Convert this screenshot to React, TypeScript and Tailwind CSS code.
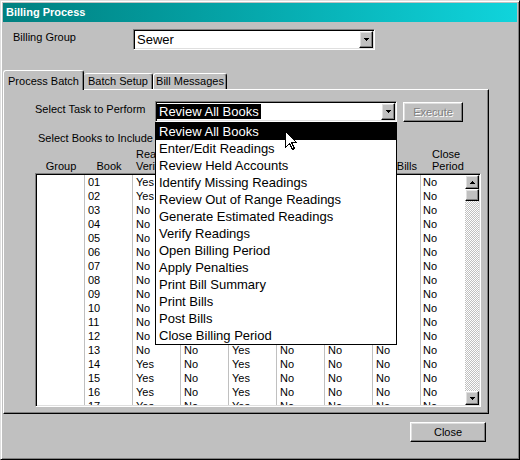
import React from 'react';

const raised =
  'border border-t-white border-l-white border-r-black border-b-black shadow-[inset_-1px_-1px_0_#808080,inset_1px_1px_0_#dfdfdf]';
const sunken =
  'border border-t-[#808080] border-l-[#808080] border-r-white border-b-white shadow-[inset_1px_1px_0_#000,inset_-1px_-1px_0_#dfdfdf]';

const tasks = [
  'Review All Books',
  'Enter/Edit Readings',
  'Review Held Accounts',
  'Identify Missing Readings',
  'Review Out of Range Readings',
  'Generate Estimated Readings',
  'Verify Readings',
  'Open Billing Period',
  'Apply Penalties',
  'Print Bill Summary',
  'Print Bills',
  'Post Bills',
  'Close Billing Period',
];

// group, book, read verified, held, period open, penalties, summary, bills, close period
const rows: string[][] = [
  ['', '01', 'Yes', 'No', 'Yes', 'No', 'No', 'No', 'No'],
  ['', '02', 'Yes', 'No', 'Yes', 'No', 'No', 'No', 'No'],
  ['', '03', 'No', 'No', 'Yes', 'No', 'No', 'No', 'No'],
  ['', '04', 'No', 'No', 'Yes', 'No', 'No', 'No', 'No'],
  ['', '05', 'No', 'No', 'Yes', 'No', 'No', 'No', 'No'],
  ['', '06', 'No', 'No', 'Yes', 'No', 'No', 'No', 'No'],
  ['', '07', 'No', 'No', 'Yes', 'No', 'No', 'No', 'No'],
  ['', '08', 'No', 'No', 'Yes', 'No', 'No', 'No', 'No'],
  ['', '09', 'No', 'No', 'Yes', 'No', 'No', 'No', 'No'],
  ['', '10', 'No', 'No', 'Yes', 'No', 'No', 'No', 'No'],
  ['', '11', 'No', 'No', 'Yes', 'No', 'No', 'No', 'No'],
  ['', '12', 'No', 'No', 'Yes', 'No', 'No', 'No', 'No'],
  ['', '13', 'No', 'No', 'Yes', 'No', 'No', 'No', 'No'],
  ['', '14', 'Yes', 'No', 'Yes', 'No', 'No', 'No', 'No'],
  ['', '15', 'Yes', 'No', 'Yes', 'No', 'No', 'No', 'No'],
  ['', '16', 'Yes', 'No', 'Yes', 'No', 'No', 'No', 'No'],
  ['', '17', 'Yes', 'No', 'Yes', 'No', 'No', 'No', 'No'],
];

const DownArrow = () => (
  <svg width="5" height="3" viewBox="0 0 5 3" shapeRendering="crispEdges">
    <rect x="0" y="0" width="5" height="1" fill="#000" />
    <rect x="1" y="1" width="3" height="1" fill="#000" />
    <rect x="2" y="2" width="1" height="1" fill="#000" />
  </svg>
);

const UpArrow = () => (
  <svg width="5" height="3" viewBox="0 0 5 3" shapeRendering="crispEdges">
    <rect x="2" y="0" width="1" height="1" fill="#000" />
    <rect x="1" y="1" width="3" height="1" fill="#000" />
    <rect x="0" y="2" width="5" height="1" fill="#000" />
  </svg>
);

const Cursor = () => (
  <svg width="13" height="20" viewBox="0 0 13 20" shapeRendering="crispEdges">
    <path d="M0.5 0.5 L0.5 16.5 L4.5 12.5 L7.5 18.5 L9.5 17.5 L6.5 11.5 L11.5 11.5 Z" fill="#fff" stroke="#000" strokeWidth="1" />
  </svg>
);

const Combo: React.FC<{ children: React.ReactNode; list?: boolean }> = ({ children, list }) => (
  <div className={`${sunken} relative w-[242px] h-[21px] bg-white p-[1px] flex`}>
    <div className="flex-1 flex items-center text-[13px]">{children}</div>
    <div className={`${raised} w-[14px] h-full bg-[#c0c0c0] flex items-center justify-center`}>
      <DownArrow />
    </div>
    {list && (
      <div className="absolute left-[-1px] top-[20px] w-[242px] border border-black bg-white z-20">
        {tasks.map((t, i) => (
          <div
            key={t}
            className={`h-[17px] leading-[17px] pl-[3px] text-[13px] whitespace-nowrap ${i === 0 ? 'bg-black text-white' : 'text-black'}`}
          >
            {t}
          </div>
        ))}
        <div className="absolute left-[129px] top-[8px]">
          <Cursor />
        </div>
      </div>
    )}
  </div>
);

export default function App() {
  return (
    <div className="w-[520px] h-[460px] bg-[#c0c0c0] p-[2px] flex flex-col border border-t-[#dfdfdf] border-l-[#dfdfdf] border-r-black border-b-black shadow-[inset_1px_1px_0_#fff,inset_-1px_-1px_0_#808080] font-['Liberation_Sans',Arial,sans-serif] text-[11px] text-black">
      {/* Title bar */}
      <div className="h-[19px] shrink-0 flex items-center pl-[3px] bg-linear-to-r from-[#008080] to-[#10d4dc] text-white font-bold text-[11px]">
        Billing Process
      </div>

      {/* Billing group */}
      <div className="mt-[7px] flex items-start pl-[10px]">
        <span className="w-[120px] pt-[2px] leading-[13px]">Billing Group</span>
        <Combo>
          <span className="pl-[2px]">Sewer</span>
        </Combo>
      </div>

      {/* Tabs */}
      <div className="mt-[20px] h-[19px] flex items-end relative z-10">
        <div className="w-[81px] h-[20px] -mb-[1px] bg-[#c0c0c0] border-t border-l border-r border-t-white border-l-white border-r-black rounded-t-[3px] shadow-[inset_-1px_0_0_#808080] flex items-center justify-center pt-[1px] leading-[13px]">
          Process Batch
        </div>
        <div className="w-[69px] h-[16px] border-t border-r border-t-white border-r-black rounded-t-[3px] shadow-[inset_-1px_0_0_#808080] flex items-center justify-center leading-[13px]">
          Batch Setup
        </div>
        <div className="w-[74px] h-[16px] border-t border-l border-r border-t-white border-l-white border-r-black rounded-t-[3px] shadow-[inset_-1px_0_0_#808080] flex items-center justify-center leading-[13px]">
          Bill Messages
        </div>
      </div>

      {/* Tab panel */}
      <div className="w-[486px] h-[325px] shrink-0 border border-t-white border-l-white border-r-black border-b-black shadow-[inset_-1px_-1px_0_#808080] flex flex-col">
        <div className="pt-[11px] pl-[31px] flex items-start">
          <span className="w-[120px] pt-[2px] leading-[13px]">Select Task to Perform</span>
          <Combo list>
            <span className="bg-black text-white px-[2px] leading-[15px]">Review All Books</span>
          </Combo>
          <div className={`${raised} w-[60px] h-[20px] mt-[1px] ml-[6px] flex items-center justify-center text-[#808080] [text-shadow:1px_1px_0_#fff]`}>
            Execute
          </div>
        </div>

        <div className="mt-[10px] pl-[34px] leading-[13px]">Select Books to Include</div>

        {/* Grid header */}
        <div className="mt-[3px] ml-[31px] w-[446px] h-[25px] pl-[2px] pb-[1px] flex items-end leading-[12px]">
          <div className="w-[48px] text-center">Group</div>
          <div className="w-[48px] text-center">Book</div>
          <div className="w-[48px] pl-[3px]">Read<br />Verified</div>
          <div className="w-[48px] text-center">Held</div>
          <div className="w-[48px] text-center">Period<br />Open</div>
          <div className="w-[48px] text-center">Penalties</div>
          <div className="w-[48px] text-center">Summary</div>
          <div className="w-[48px] pr-[4px] flex justify-end whitespace-nowrap">Print Bills</div>
          <div className="w-[58px] pl-[11px]">Close<br />Period</div>
        </div>

        {/* Grid */}
        <div className={`${sunken} ml-[31px] w-[446px] h-[234px] bg-white p-[1px] flex overflow-hidden`}>
          <div className="flex-1 flex flex-col overflow-hidden">
            {rows.map((r) => (
              <div key={r[1]} className="h-[14px] shrink-0 flex leading-[14px]">
                {r.map((c, i) => (
                  <div
                    key={i}
                    className={i < 8 ? 'w-[48px] h-full border-r border-[#c0c0c0] pl-[3px]' : 'w-[44px] h-full pl-[2px]'}
                  >
                    {c}
                  </div>
                ))}
              </div>
            ))}
          </div>
          <div className="w-[14px] flex flex-col">
            <div className={`${raised} h-[14px] bg-[#c0c0c0] flex items-center justify-center`}>
              <UpArrow />
            </div>
            <div className={`${raised} h-[12px] bg-[#c0c0c0]`} />
            <div className="flex-1 bg-[repeating-conic-gradient(#c0c0c0_0_25%,#fff_0_50%)] bg-[length:2px_2px]" />
            <div className={`${raised} h-[14px] bg-[#c0c0c0] flex items-center justify-center`}>
              <DownArrow />
            </div>
          </div>
        </div>
      </div>

      {/* Close */}
      <div className="mt-[8px] flex justify-end pr-[31px]">
        <div className={`${raised} w-[76px] h-[20px] flex items-center justify-center`}>Close</div>
      </div>
    </div>
  );
}
